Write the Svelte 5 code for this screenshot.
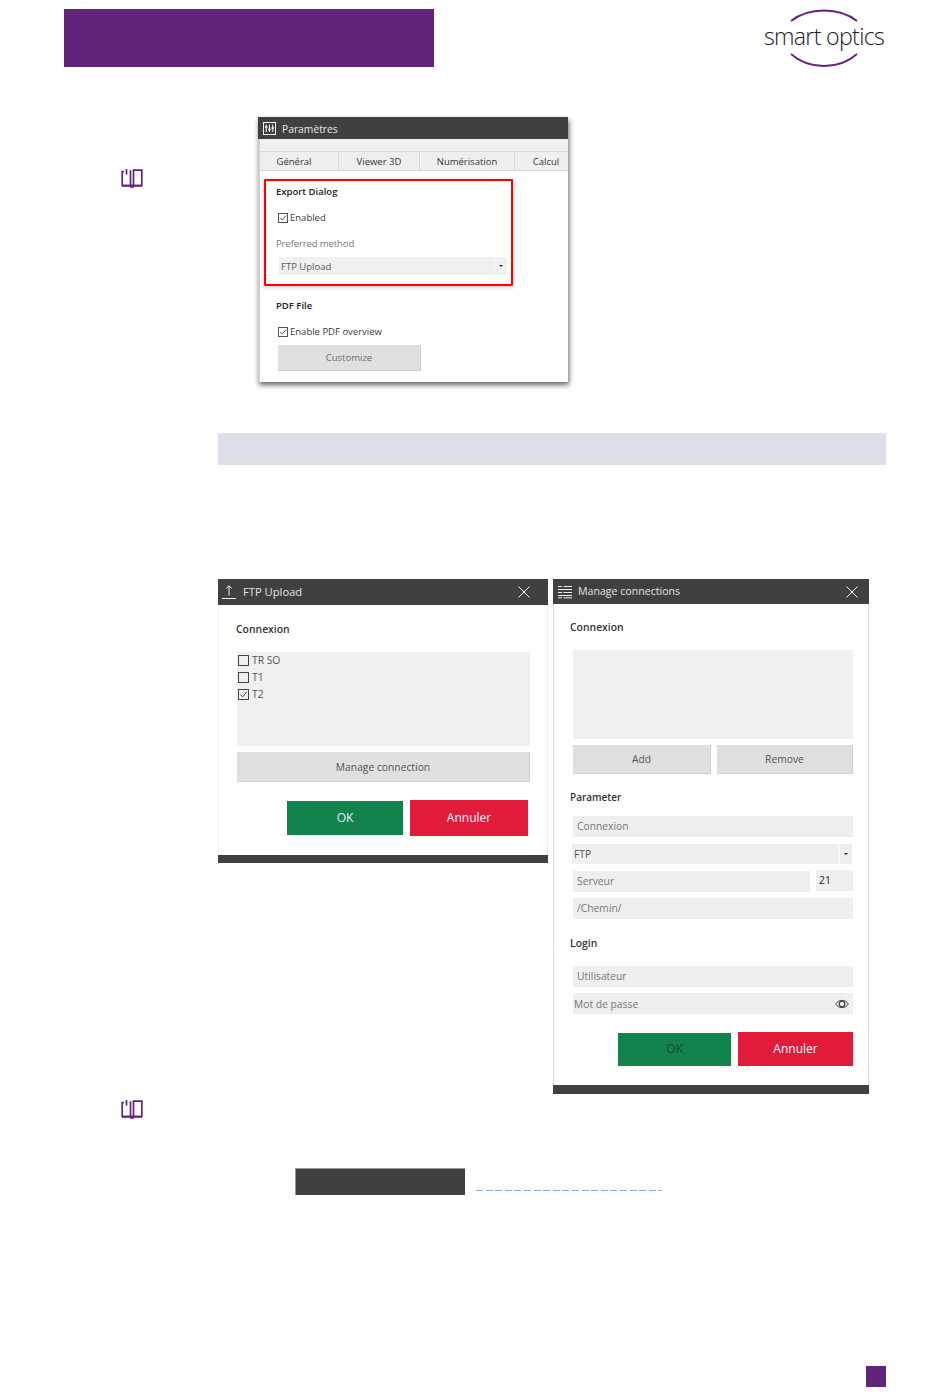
<script>
  const connections = [
    { name: 'TR SO', checked: false },
    { name: 'T1', checked: false },
    { name: 'T2', checked: true }
  ];
  const tabs = [
    { label: 'Général', width: 79, offset: -10 },
    { label: 'Viewer 3D', width: 81, offset: 0 },
    { label: 'Numérisation', width: 95, offset: 0 },
    { label: 'Calcul', width: 53, offset: 9 }
  ];
</script>

{#snippet book()}
  <svg class="book" width="22" height="20" viewBox="0 0 22 20" fill="none" stroke="#622479">
    <path d="M3 3.5H1.2V17.5H20.8V2.2H12.5V17.5M9.5 2.2V17.5M5.5 1V6.5" stroke-width="1.7" />
    <path d="M1 17.8H21M9 18.8H13" stroke-width="2" />
  </svg>
{/snippet}

{#snippet check(on, size = 11)}
  <svg class="check" width={size} height={size} viewBox="0 0 11 11" fill="none">
    <rect x="0.5" y="0.5" width="10" height="10" stroke="#444" />
    {#if on}<path d="M2.5 5.5L4.7 7.8L8.8 2.8" stroke="#444" />{/if}
  </svg>
{/snippet}

{#snippet closeX()}
  <svg class="close" width="12" height="12" viewBox="0 0 12 12" stroke="#f2f2f2">
    <path d="M0.5 0.5L11.5 11.5M11.5 0.5L0.5 11.5" />
  </svg>
{/snippet}

<div class="page">
  <header class="top">
    <div class="banner"></div>
    <div class="logo">
      <svg width="68" height="13" viewBox="0 0 68 13" fill="none" stroke="#622479" stroke-width="1.8">
        <path d="M1 12C19 -2 49 -2 67 12" />
      </svg>
      <span class="logo-text">smart optics</span>
      <svg width="68" height="15" viewBox="0 0 68 15" fill="none" stroke="#622479" stroke-width="1.8">
        <path d="M1 1C19 17 49 17 67 1" />
      </svg>
    </div>
  </header>

  <section class="settings-row">
    <div class="note-icon">{@render book()}</div>
    <div class="settings">
      <div class="settings-title">
        <svg width="13" height="13" viewBox="0 0 13 13" fill="none" stroke="#f2f2f2">
          <rect x="0.5" y="0.5" width="12" height="12" />
          <path d="M3.3 2.5V10M6.5 2.5V10M9.7 2.5V10" />
          <path d="M2 5H4.6M5.2 7.5H7.8M8.4 6H11" stroke-width="1.5" />
        </svg>
        <span>Paramètres</span>
      </div>
      <div class="settings-strip"></div>
      <div class="tabs">
        {#each tabs as tab}
          <div class="tab" style="width: {tab.width}px">
            <span style="transform: translateX({tab.offset / 2}px)">{tab.label}</span>
          </div>
        {/each}
      </div>
      <div class="settings-body">
        <div class="highlight">
          <div class="group-title">Export Dialog</div>
          <label class="check-line enabled">{@render check(true, 10)}<span>Enabled</span></label>
          <div class="muted-label">Preferred method</div>
          <div class="select method">
            <span>FTP Upload</span>
            <span class="caret-box"><i class="caret"></i></span>
          </div>
        </div>
        <div class="group-title pdf">PDF File</div>
        <label class="check-line overview">{@render check(true, 10)}<span>Enable PDF overview</span></label>
        <div class="btn customize">Customize</div>
      </div>
    </div>
  </section>

  <div class="band"></div>

  <section class="dialogs">
    <div class="dialog ftp">
      <div class="title-bar">
        <svg width="14" height="14" viewBox="0 0 14 14" fill="none" stroke="#f2f2f2">
          <path d="M7 10.5V0.8M4.2 3.6L7 0.8L9.8 3.6M0 13.5H14" />
        </svg>
        <span class="title-text">FTP Upload</span>
        {@render closeX()}
      </div>
      <div class="ftp-body">
        <div class="section-title">Connexion</div>
        <div class="conn-list">
          {#each connections as c}
            <div class="conn-row">{@render check(c.checked)}<span>{c.name}</span></div>
          {/each}
        </div>
        <div class="btn manage">Manage connection</div>
        <div class="actions ftp-actions">
          <div class="btn-ok ftp-ok">OK</div>
          <div class="btn-cancel ftp-cancel">Annuler</div>
        </div>
      </div>
      <div class="foot-bar"></div>
    </div>

    <div class="dialog manage-dialog">
      <div class="title-bar short">
        <svg width="14" height="14" viewBox="0 0 14 14" fill="none" stroke="#f2f2f2">
          <path d="M0 1.5H4M5.5 1.5H14M0 4.5H14M0 7.5H4M5.5 7.5H14M0 10.5H14M0 12.8H4M5.5 12.8H14" />
        </svg>
        <span class="title-text">Manage connections</span>
        {@render closeX()}
      </div>
      <div class="manage-body">
        <div class="section-title">Connexion</div>
        <div class="empty-list"></div>
        <div class="pair">
          <div class="btn add">Add</div>
          <div class="btn remove">Remove</div>
        </div>
        <div class="section-title parameter">Parameter</div>
        <div class="field conn">Connexion</div>
        <div class="select proto">
          <span>FTP</span>
          <span class="caret-box"><i class="caret"></i></span>
        </div>
        <div class="server-row">
          <div class="field server">Serveur</div>
          <div class="field port">21</div>
        </div>
        <div class="field path">/Chemin/</div>
        <div class="section-title login">Login</div>
        <div class="field user">Utilisateur</div>
        <div class="field password">
          <span>Mot de passe</span>
          <svg width="14" height="10" viewBox="0 0 14 10" fill="none" stroke="#444">
            <path d="M0.7 5C3.5 0.2 10.5 0.2 13.3 5C10.5 9.8 3.5 9.8 0.7 5Z" />
            <circle cx="7" cy="5" r="2.8" stroke-width="1.3" />
          </svg>
        </div>
        <div class="actions manage-actions">
          <div class="btn-ok manage-ok">OK</div>
          <div class="btn-cancel manage-cancel">Annuler</div>
        </div>
      </div>
      <div class="foot-bar tall"></div>
    </div>
  </section>

  <div class="note-second">{@render book()}</div>

  <div class="link-row">
    <div class="dark-chip"></div>
    <div class="dashes"></div>
  </div>

  <div class="page-mark"></div>
</div>

<style>
  :global(body) {
    margin: 0;
    background: #fff;
  }

  .page {
    width: 950px;
    height: 1397px;
    overflow: hidden;
    font-family: 'Open Sans', 'Noto Sans', sans-serif;
    font-size: 9.5px;
    color: #3c3c3c;
  }

  .top {
    display: flex;
    justify-content: space-between;
    align-items: flex-start;
    padding: 9px 66px 0 64px;
    height: 58px;
  }

  .banner {
    width: 370px;
    height: 58px;
    background: #622479;
  }

  .logo {
    display: flex;
    flex-direction: column;
    align-items: center;
    width: 120px;
    margin-top: 0;
  }

  .logo svg {
    display: block;
  }

  .logo-text {
    font-size: 23.2px;
    line-height: 29px;
    height: 31px;
    color: #1c1c1c;
    font-weight: 300;
    letter-spacing: -0.7px;
    white-space: nowrap;
  }

  .settings-row {
    display: flex;
    padding: 50px 0 0 121px;
  }

  .note-icon {
    width: 137px;
    padding-top: 51px;
  }

  .book {
    display: block;
  }

  .settings {
    width: 310px;
    height: 265px;
    background: #fff;
    box-shadow: 1px 3px 5px rgba(0, 0, 0, 0.6);
    border-left: 2px solid #cfcfcf;
    box-sizing: border-box;
  }

  .settings-title {
    display: flex;
    align-items: center;
    gap: 6px;
    height: 22px;
    padding-left: 5px;
    margin-left: -2px;
    background: #404040;
    color: #e8e8e8;
    font-size: 10.3px;
  }

  .settings-title span {
    padding-top: 2px;
  }

  .settings-strip {
    height: 12px;
    background: #f0f0f0;
  }

  .tabs {
    display: flex;
    height: 20px;
    box-sizing: border-box;
    background: #efefef;
    border-top: 1px solid #d8d8d8;
    border-bottom: 1px solid #d8d8d8;
  }

  .tab {
    display: flex;
    align-items: center;
    justify-content: center;
    box-sizing: border-box;
    border-right: 1px solid #d8d8d8;
    color: #333;
  }

  .tab:last-child {
    border-right: 0;
  }

  .settings-body {
    padding: 8px 0 0 4px;
  }

  .highlight {
    width: 249px;
    height: 107px;
    box-sizing: border-box;
    border: 2px solid #f00;
    border-radius: 1px;
    padding: 4px 4px 0 10px;
    box-shadow: 0 1px 4px rgba(0, 0, 0, 0.25);
  }

  .group-title {
    font-weight: 600;
    color: #222;
    line-height: 14px;
  }

  .check-line {
    display: flex;
    align-items: center;
    gap: 2px;
    height: 14px;
    line-height: 14px;
  }

  .check {
    flex: none;
  }

  .enabled {
    margin: 12px 0 0 2px;
  }

  .muted-label {
    margin-top: 12px;
    line-height: 14px;
    color: #777;
    letter-spacing: -0.1px;
  }

  .select {
    display: flex;
    justify-content: space-between;
    align-items: center;
    background: #f0f0f0;
    color: #555;
    padding-left: 2px;
  }

  .method {
    margin: 6px 0 0 3px;
    width: 228px;
    height: 18px;
    box-sizing: border-box;
  }

  .caret-box {
    display: flex;
    align-items: center;
    justify-content: center;
    width: 12px;
    height: 100%;
    border-left: 1px solid #fafafa;
  }

  .caret {
    width: 0;
    height: 0;
    border: 2.5px solid transparent;
    border-top: 2.5px solid #222;
    border-bottom: 0;
  }

  .pdf {
    margin: 13px 0 0 12px;
  }

  .overview {
    margin: 12px 0 0 14px;
  }

  .btn {
    display: flex;
    align-items: center;
    justify-content: center;
    box-sizing: border-box;
    background: #e0e0e0;
    border-right: 1px solid #d0d0d0;
    border-bottom: 1px solid #d0d0d0;
    color: #555;
    font-size: 10.3px;
  }

  .customize {
    width: 143px;
    height: 26px;
    margin: 6px 0 0 14px;
    color: #6c6c6c;
    font-size: 9.5px;
  }

  .band {
    width: 668px;
    height: 32px;
    margin: 51px 0 0 218px;
    background: #dfdfe8;
  }

  .dialogs {
    display: flex;
    align-items: flex-start;
    gap: 5px;
    margin: 114px 0 0 218px;
    font-size: 10.3px;
  }

  .dialog {
    background: #fff;
    box-sizing: border-box;
  }

  .ftp {
    width: 330px;
    border-left: 1px solid #efefef;
    border-right: 1px solid #efefef;
  }

  .manage-dialog {
    width: 316px;
    border-left: 1px solid #ddd;
    border-right: 1px solid #ddd;
  }

  .title-bar {
    display: flex;
    align-items: center;
    height: 26px;
    margin: 0 -1px;
    padding: 0 18px 0 4px;
    background: #404040;
    color: #e4e4e4;
    font-size: 11.2px;
  }

  .title-bar.short {
    height: 25px;
    padding: 0 11px 0 5px;
  }

  .title-bar.short .title-text {
    margin-left: 6px;
    font-size: 10.6px;
  }

  .title-text {
    margin-left: 7px;
    padding-bottom: 1px;
    flex: 1;
  }

  .close {
    flex: none;
  }

  .section-title {
    color: #333;
    font-weight: 600;
    line-height: 14px;
    font-size: 10.4px;
  }

  .ftp-body {
    height: 250px;
    padding: 17px 17px 0 17px;
    box-sizing: border-box;
  }

  .conn-list {
    width: 293px;
    height: 94px;
    margin: 16px 0 0 1px;
    box-sizing: border-box;
    background: #f0f0f0;
    display: flex;
    flex-direction: column;
  }

  .conn-row {
    display: flex;
    align-items: center;
    gap: 3px;
    height: 17px;
    padding: 0 0 0 1px;
    color: #555;
  }

  .conn-row span {
    padding-bottom: 1px;
  }

  .manage {
    width: 293px;
    height: 30px;
    margin: 6px 0 0 1px;
    padding-top: 1px;
  }

  .actions {
    display: flex;
    align-items: center;
    color: #fff;
    font-size: 12px;
  }

  .ftp-actions {
    margin: 18px 0 0 51px;
    gap: 7px;
  }

  .btn-ok,
  .btn-cancel {
    display: flex;
    align-items: center;
    justify-content: center;
    padding-bottom: 2px;
    box-sizing: border-box;
  }

  .btn-ok {
    background: #13834e;
    color: #e9f4ee;
  }

  .btn-cancel {
    background: #e31b3b;
  }

  .ftp-ok {
    width: 116px;
    height: 34px;
  }

  .ftp-cancel {
    width: 118px;
    height: 36px;
  }

  .foot-bar {
    height: 8px;
    margin: 0 -1px;
    background: #404040;
  }

  .foot-bar.tall {
    height: 9px;
  }

  .manage-body {
    height: 481px;
    padding: 16px 15px 0 19px;
    box-sizing: border-box;
  }

  .manage-body .section-title {
    margin-left: -3px;
  }

  .empty-list {
    height: 89px;
    margin-top: 16px;
    background: #f0f0f0;
  }

  .pair {
    display: flex;
    gap: 6px;
    margin-top: 6px;
  }

  .add {
    width: 138px;
    height: 29px;
  }

  .remove {
    width: 136px;
    height: 29px;
  }

  .manage-body .parameter {
    margin-top: 16px;
    font-size: 10px;
  }

  .field {
    display: flex;
    align-items: center;
    height: 21px;
    padding: 0 0 1px 4px;
    background: #efefef;
    color: #777;
    box-sizing: border-box;
  }

  .conn {
    margin-top: 12px;
  }

  .proto {
    width: 280px;
    height: 20px;
    margin: 7px 0 0 -1px;
    padding-left: 2px;
    box-sizing: border-box;
    background: #efefef;
  }

  .server-row {
    display: flex;
    gap: 6px;
    margin-top: 7px;
  }

  .server {
    width: 237px;
  }

  .port {
    width: 37px;
    color: #222;
    margin-top: -1px;
    padding-left: 3px;
  }

  .path {
    margin-top: 6px;
  }

  .manage-body .login {
    margin-top: 17px;
  }

  .user {
    margin-top: 16px;
  }

  .password {
    justify-content: space-between;
    margin-top: 6px;
    padding: 1px 4px 0 1px;
  }

  .manage-actions {
    margin: 18px 0 0 45px;
    gap: 7px;
  }

  .manage-ok {
    width: 113px;
    height: 33px;
    color: #0d4f31;
  }

  .manage-cancel {
    width: 115px;
    height: 34px;
  }

  .note-second {
    margin: 5px 0 0 121px;
    height: 21px;
  }

  .link-row {
    display: flex;
    align-items: flex-end;
    gap: 11px;
    margin: 48px 0 0 295px;
  }

  .dark-chip {
    width: 170px;
    height: 27px;
    box-sizing: border-box;
    background: #404040;
    border-top: 1px solid #9a9a9a;
    border-left: 1px solid #9a9a9a;
  }

  .dashes {
    width: 186px;
    height: 1px;
    margin-bottom: 4px;
    background: repeating-linear-gradient(90deg, #86aede 0 7px, transparent 7px 9.6px);
  }

  .page-mark {
    width: 20px;
    height: 21px;
    margin: 171px 0 0 866px;
    background: #622479;
  }
</style>
